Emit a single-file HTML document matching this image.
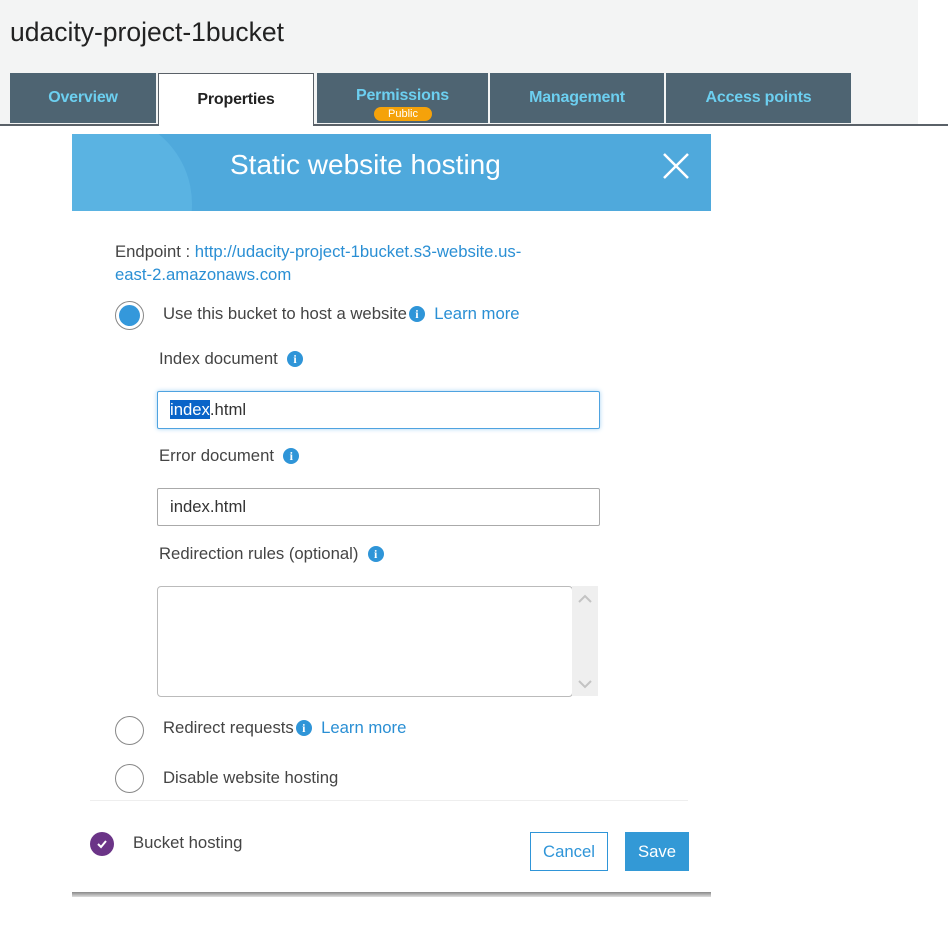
<!DOCTYPE html>
<html><head><meta charset="utf-8"><style>
body{margin:0;width:948px;height:925px;background:#fff;font-family:"Liberation Sans",Arial,sans-serif;position:relative;overflow:hidden}
.a{position:absolute}
.tab{position:absolute;top:73px;height:50px;background:#4e6472;color:#6ccff0;font-weight:bold;font-size:16px;text-align:center;line-height:50px;letter-spacing:-0.2px}
.t{position:absolute;font-size:16.7px;color:#444}
.l{color:#2a8fd4}
.info{display:inline-block;width:16px;height:16px;border-radius:50%;background:#2f95d8;color:#fff;font-size:12px;font-weight:bold;line-height:16px;text-align:center;font-family:"Liberation Serif",serif;vertical-align:1px}
.radio{position:absolute;width:29px;height:29px;border:1px solid #888;border-radius:50%;background:#fff;box-sizing:border-box}
.inp{position:absolute;left:157px;width:443px;border:1px solid #aaa;border-radius:2px;font-size:16.7px;color:#333;line-height:36px;box-sizing:border-box;padding-left:12px;height:38px}
</style></head><body>
<div class="a" style="left:0;top:0;width:918px;height:125px;background:#f3f4f4"></div>
<div class="a" style="left:0;top:124px;width:948px;height:2px;background:#5a6168"></div>
<div class="t" style="left:10px;top:17px;font-size:26.5px;color:#222">udacity-project-1bucket</div>
<div class="tab" style="left:10px;width:146px">Overview</div>
<div class="tab" style="left:158px;width:156px;height:53px;background:#fff;color:#222;border:1px solid #5a6168;border-bottom:none;box-sizing:border-box;line-height:52px">Properties</div>
<div class="tab" style="left:317px;width:171px"><div style="margin-top:-2px">Permissions</div></div>
<div class="a" style="left:374px;top:107px;width:58px;height:14px;border-radius:7px;background:#f5a20a;color:#fff;font-size:11px;text-align:center;line-height:14px">Public</div>
<div class="tab" style="left:490px;width:174px">Management</div>
<div class="tab" style="left:666px;width:185px">Access points</div>

<div class="a" style="left:72px;top:134px;width:639px;height:77px;background:#4fa9dc;overflow:hidden">
<div class="a" style="left:-60px;top:-20px;width:180px;height:180px;border-radius:50%;background:#5ab3e2"></div>
<div class="a" style="left:158px;top:0;color:#fff;font-size:28px;line-height:62px">Static website hosting</div>
<svg class="a" style="left:591px;top:19px" width="26" height="26"><path d="M1 1L25 25M25 1L1 25" stroke="#fff" stroke-width="2.5"/></svg>
</div>
<div class="a" style="left:72px;top:211px;width:639px;height:682px;background:#fff"></div>
<div class="a" style="left:72px;top:892px;width:639px;height:5px;background:linear-gradient(#888,#ddd)"></div>

<div class="t" style="left:115px;top:240px;line-height:23px">Endpoint : <span class="l">http://udacity-project-1bucket.s3-website.us-<br>east-2.amazonaws.com</span></div>
<div class="radio" style="left:115px;top:301px"><div class="a" style="left:3px;top:3px;width:21px;height:21px;border-radius:50%;background:#3498db"></div></div>
<div class="t" style="left:163px;top:304px">Use this bucket to host a website<span class="info" style="margin-left:2px">i</span>&nbsp; <span class="l">Learn more</span></div>
<div class="t" style="left:159px;top:349px">Index document &nbsp;<span class="info">i</span></div>
<div class="inp" style="top:391px;border-color:#4fa3e0;box-shadow:0 0 5px #a8d2f2"><span style="background:#0a64c8;color:#fff">index</span>.html</div>
<div class="t" style="left:159px;top:446px">Error document &nbsp;<span class="info">i</span></div>
<div class="inp" style="top:488px">index.html</div>
<div class="t" style="left:159px;top:544px">Redirection rules (optional) &nbsp;<span class="info">i</span></div>
<div class="a" style="left:157px;top:586px;width:414px;height:109px;border:1px solid #bbb;border-radius:4px"></div>
<div class="a" style="left:572px;top:586px;width:26px;height:110px;background:#efefef"></div>
<svg class="a" style="left:578px;top:594px" width="14" height="10"><path d="M1 8L7 2L13 8" stroke="#c3c3c3" stroke-width="2" fill="none"/></svg>
<svg class="a" style="left:578px;top:679px" width="14" height="10"><path d="M1 2L7 8L13 2" stroke="#c3c3c3" stroke-width="2" fill="none"/></svg>
<div class="radio" style="left:115px;top:716px"></div>
<div class="t" style="left:163px;top:718px">Redirect requests<span class="info" style="margin-left:2px">i</span>&nbsp; <span class="l">Learn more</span></div>
<div class="radio" style="left:115px;top:764px"></div>
<div class="t" style="left:163px;top:768px">Disable website hosting</div>
<div class="a" style="left:90px;top:800px;width:598px;height:1px;background:#eee"></div>
<div class="a" style="left:90px;top:832px;width:24px;height:24px;border-radius:50%;background:#6b3487"></div>
<svg class="a" style="left:96px;top:838px" width="12" height="12"><path d="M2 6L5 9L10 3" stroke="#fff" stroke-width="2" fill="none"/></svg>
<div class="t" style="left:133px;top:833px">Bucket hosting</div>
<div class="a" style="left:530px;top:832px;width:78px;height:39px;border:1px solid #2f95d8;box-sizing:border-box;color:#2f95d8;font-size:16.7px;text-align:center;line-height:37px">Cancel</div>
<div class="a" style="left:625px;top:832px;width:64px;height:39px;background:#3399d6;color:#fff;font-size:16.7px;text-align:center;line-height:39px">Save</div>
</body></html>
